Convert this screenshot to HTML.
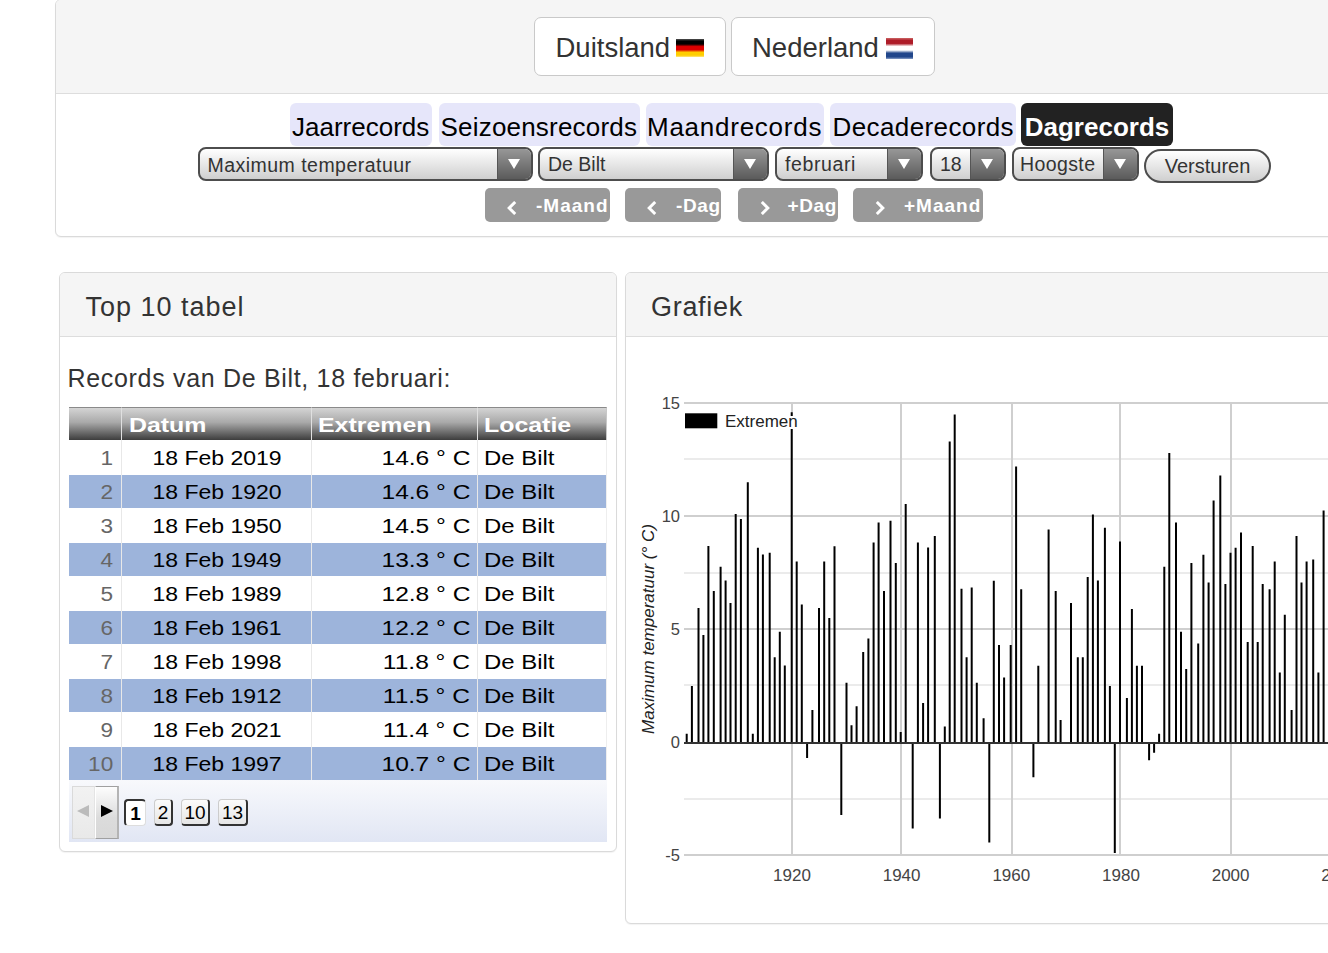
<!DOCTYPE html>
<html><head><meta charset="utf-8">
<style>
*{box-sizing:border-box;margin:0;padding:0}
html,body{width:1328px;height:953px;overflow:hidden;background:#fff;font-family:"Liberation Sans",sans-serif;color:#333}
.abs{position:absolute}
.panel{position:absolute;border:1px solid #dadada;border-radius:6px;background:#fff;box-shadow:0 1px 1px rgba(0,0,0,.05);overflow:hidden}
.ph{position:absolute;left:0;top:0;right:0;background:#f5f5f5;border-bottom:1px solid #ddd}
.cbtn{position:absolute;top:16.5px;height:59px;border:1.5px solid #c9c9c9;border-radius:7px;background:#fff;font-size:27px;color:#333;white-space:nowrap}
.cbtn span{position:absolute;top:13px;line-height:31px}
.tab{position:absolute;top:103px;height:43px;background:#e6e6fa;border-radius:6px;font-size:26px;color:#000;line-height:48px;white-space:nowrap;text-align:center}
.sel{position:absolute;top:147px;height:34px;border:2px solid #4d4d4d;border-radius:8px;background:linear-gradient(#fff,#cfcfcf);overflow:hidden;font-size:19.5px;color:#333;white-space:nowrap}
.sel .t{position:absolute;left:8px;top:0;line-height:31px}
.sel .ar{position:absolute;top:-1px;bottom:-1px;right:0;width:34px;background:linear-gradient(#999,#595959);border-left:1px solid #555}
.sel .ar:after{content:"";position:absolute;left:10px;top:11px;border-left:6px solid transparent;border-right:6px solid transparent;border-top:10.5px solid #fff}
.nb{position:absolute;top:188px;height:33.5px;background:#999;border-radius:5px;color:#fff;font-weight:bold;font-size:19px;white-space:nowrap}
.nb .t{position:absolute;top:0;line-height:36px;letter-spacing:1px}
.nb svg{position:absolute;top:12.5px}
table{border-collapse:collapse}
</style></head><body>
<!-- top panel -->
<div class="panel" style="left:55px;top:-1px;width:1400px;height:238px">
  <div class="ph" style="height:94px"></div>
</div>
<div class="cbtn" style="left:534px;width:192px"><span style="left:20.5px;top:14px;font-size:27.5px">Duitsland</span>
  <div class="abs" style="left:140.5px;top:21.5px;width:28px;height:17.5px;background:linear-gradient(#555 0,#000 12%,#000 28%,#dd0000 42%,#dd0000 60%,#ffce00 74%,#ffce00 90%,#ffe680 100%)"></div></div>
<div class="cbtn" style="left:731px;width:204px"><span style="left:20px;top:14px;font-size:27.5px">Nederland</span>
  <div class="abs" style="left:153.5px;top:20.5px;width:27px;height:20.8px;background:linear-gradient(#c66 0,#ae1c28 12%,#ae1c28 26%,#fff 40%,#fff 58%,#21468b 72%,#21468b 90%,#8aa0c8 100%)"></div></div>

<div class="tab" style="left:290px;width:142px;text-align:left;padding-left:2px">Jaarrecords</div>
<div class="tab" style="left:438.5px;width:201px;text-align:left;padding-left:2px;letter-spacing:0.2px">Seizoensrecords</div>
<div class="tab" style="left:645.5px;width:178.5px;text-align:left;padding-left:1.5px;letter-spacing:0.75px">Maandrecords</div>
<div class="tab" style="left:830px;width:186px;text-align:left;padding-left:2.5px;letter-spacing:0.4px">Decaderecords</div>
<div class="tab" style="left:1021px;width:152px;background:#222;color:#fff;font-weight:bold">Dagrecords</div>

<div class="sel" style="left:198px;width:335px"><div class="t" style="left:7.5px;top:0.5px;letter-spacing:0.47px">Maximum temperatuur</div><div class="ar"></div></div>
<div class="sel" style="left:538px;width:231px"><div class="t">De Bilt</div><div class="ar"></div></div>
<div class="sel" style="left:775px;width:148px"><div class="t" style="letter-spacing:0.6px">februari</div><div class="ar"></div></div>
<div class="sel" style="left:930px;width:76px"><div class="t">18</div><div class="ar"></div></div>
<div class="sel" style="left:1012px;width:127px"><div class="t" style="left:6px;letter-spacing:0.4px">Hoogste</div><div class="ar"></div></div>
<div class="abs" style="left:1144px;top:149px;width:127px;height:34px;border:2px solid #4d4d4d;border-radius:17px;background:linear-gradient(#fff,#cfcfcf);font-size:20px;color:#333;line-height:30px;text-align:center">Versturen</div>

<div class="nb" style="left:485px;width:125px"><svg style="left:22px" width="10" height="14" viewBox="0 0 10 14"><path d="M8.2 1 2.2 7l6 6" fill="none" stroke="#fff" stroke-width="3"/></svg><div class="t" style="left:51px">-Maand</div></div>
<div class="nb" style="left:625px;width:96px"><svg style="left:22px" width="10" height="14" viewBox="0 0 10 14"><path d="M8.2 1 2.2 7l6 6" fill="none" stroke="#fff" stroke-width="3"/></svg><div class="t" style="left:51px;letter-spacing:0.6px">-Dag</div></div>
<div class="nb" style="left:738px;width:100px"><svg style="left:22px" width="10" height="14" viewBox="0 0 10 14"><path d="M1.8 1 7.8 7l-6 6" fill="none" stroke="#fff" stroke-width="3"/></svg><div class="t" style="left:49.5px;letter-spacing:0.6px">+Dag</div></div>
<div class="nb" style="left:853px;width:130px"><svg style="left:22px" width="10" height="14" viewBox="0 0 10 14"><path d="M1.8 1 7.8 7l-6 6" fill="none" stroke="#fff" stroke-width="3"/></svg><div class="t" style="left:51px">+Maand</div></div>

<!-- left panel -->
<div class="panel" style="left:59px;top:272px;width:558px;height:580px">
  <div class="ph" style="height:64px"></div>
</div>
<div class="abs" style="left:85.5px;top:291px;font-size:27px;line-height:32px;letter-spacing:1.0px;color:#333">Top 10 tabel</div>
<div class="abs" style="left:67.5px;top:363px;font-size:25px;line-height:30px;letter-spacing:0.68px;color:#333">Records van De Bilt, 18 februari:</div>

<!-- right panel -->
<div class="panel" style="left:625px;top:272px;width:800px;height:652px">
  <div class="ph" style="height:64px"></div>
</div>
<div class="abs" style="left:651px;top:291px;font-size:27px;line-height:32px;letter-spacing:0.7px;color:#333">Grafiek</div>
<style>.th{position:absolute;top:407px;height:33px;background:linear-gradient(#d4d4d4 0,#a9a9a9 45%,#3d3d3d 100%);border-top:1px solid #8a8a8a}.tht{position:absolute;top:0;line-height:34px;font-weight:bold;font-size:20px;color:#fff;transform:scaleX(1.245);transform-origin:0 50%;white-space:nowrap}.tr{position:absolute;left:69px;width:538px;height:33px}.td{position:absolute;top:0;line-height:34px;font-size:20px;color:#000;white-space:nowrap}.vs{position:absolute;width:1px;background:#e8e8e8}</style>
<div class="th" style="left:69px;width:52px"></div>
<div class="th" style="left:121px;width:190px;border-left:1px solid #e0e0e0"><div class="tht" style="left:6.5px">Datum</div></div>
<div class="th" style="left:311px;width:166px;border-left:1px solid #e0e0e0"><div class="tht" style="left:5.5px">Extremen</div></div>
<div class="th" style="left:477px;width:130px;border-left:1px solid #e0e0e0;border-right:1px solid #c8c8c8"><div class="tht" style="left:5.5px">Locatie</div></div>
<div class="tr" style="top:441px;background:#fff"><div class="td" style="right:493.5px;color:#666;transform:scaleX(1.13);transform-origin:100% 50%">1</div><div class="td" style="left:148px;width:0"><span style="position:absolute;left:0;transform:translateX(-50%) scaleX(1.15)">18 Feb 2019</span></div><div class="td" style="right:137px;transform:scaleX(1.228);transform-origin:100% 50%">14.6 ° C</div><div class="td" style="left:415px;transform:scaleX(1.197);transform-origin:0 50%">De Bilt</div></div>
<div class="tr" style="top:475px;background:#9db4db"><div class="td" style="right:493.5px;color:#666;transform:scaleX(1.13);transform-origin:100% 50%">2</div><div class="td" style="left:148px;width:0"><span style="position:absolute;left:0;transform:translateX(-50%) scaleX(1.15)">18 Feb 1920</span></div><div class="td" style="right:137px;transform:scaleX(1.228);transform-origin:100% 50%">14.6 ° C</div><div class="td" style="left:415px;transform:scaleX(1.197);transform-origin:0 50%">De Bilt</div></div>
<div class="tr" style="top:509px;background:#fff"><div class="td" style="right:493.5px;color:#666;transform:scaleX(1.13);transform-origin:100% 50%">3</div><div class="td" style="left:148px;width:0"><span style="position:absolute;left:0;transform:translateX(-50%) scaleX(1.15)">18 Feb 1950</span></div><div class="td" style="right:137px;transform:scaleX(1.228);transform-origin:100% 50%">14.5 ° C</div><div class="td" style="left:415px;transform:scaleX(1.197);transform-origin:0 50%">De Bilt</div></div>
<div class="tr" style="top:543px;background:#9db4db"><div class="td" style="right:493.5px;color:#666;transform:scaleX(1.13);transform-origin:100% 50%">4</div><div class="td" style="left:148px;width:0"><span style="position:absolute;left:0;transform:translateX(-50%) scaleX(1.15)">18 Feb 1949</span></div><div class="td" style="right:137px;transform:scaleX(1.228);transform-origin:100% 50%">13.3 ° C</div><div class="td" style="left:415px;transform:scaleX(1.197);transform-origin:0 50%">De Bilt</div></div>
<div class="tr" style="top:577px;background:#fff"><div class="td" style="right:493.5px;color:#666;transform:scaleX(1.13);transform-origin:100% 50%">5</div><div class="td" style="left:148px;width:0"><span style="position:absolute;left:0;transform:translateX(-50%) scaleX(1.15)">18 Feb 1989</span></div><div class="td" style="right:137px;transform:scaleX(1.228);transform-origin:100% 50%">12.8 ° C</div><div class="td" style="left:415px;transform:scaleX(1.197);transform-origin:0 50%">De Bilt</div></div>
<div class="tr" style="top:611px;background:#9db4db"><div class="td" style="right:493.5px;color:#666;transform:scaleX(1.13);transform-origin:100% 50%">6</div><div class="td" style="left:148px;width:0"><span style="position:absolute;left:0;transform:translateX(-50%) scaleX(1.15)">18 Feb 1961</span></div><div class="td" style="right:137px;transform:scaleX(1.228);transform-origin:100% 50%">12.2 ° C</div><div class="td" style="left:415px;transform:scaleX(1.197);transform-origin:0 50%">De Bilt</div></div>
<div class="tr" style="top:645px;background:#fff"><div class="td" style="right:493.5px;color:#666;transform:scaleX(1.13);transform-origin:100% 50%">7</div><div class="td" style="left:148px;width:0"><span style="position:absolute;left:0;transform:translateX(-50%) scaleX(1.15)">18 Feb 1998</span></div><div class="td" style="right:137px;transform:scaleX(1.228);transform-origin:100% 50%">11.8 ° C</div><div class="td" style="left:415px;transform:scaleX(1.197);transform-origin:0 50%">De Bilt</div></div>
<div class="tr" style="top:679px;background:#9db4db"><div class="td" style="right:493.5px;color:#666;transform:scaleX(1.13);transform-origin:100% 50%">8</div><div class="td" style="left:148px;width:0"><span style="position:absolute;left:0;transform:translateX(-50%) scaleX(1.15)">18 Feb 1912</span></div><div class="td" style="right:137px;transform:scaleX(1.228);transform-origin:100% 50%">11.5 ° C</div><div class="td" style="left:415px;transform:scaleX(1.197);transform-origin:0 50%">De Bilt</div></div>
<div class="tr" style="top:713px;background:#fff"><div class="td" style="right:493.5px;color:#666;transform:scaleX(1.13);transform-origin:100% 50%">9</div><div class="td" style="left:148px;width:0"><span style="position:absolute;left:0;transform:translateX(-50%) scaleX(1.15)">18 Feb 2021</span></div><div class="td" style="right:137px;transform:scaleX(1.228);transform-origin:100% 50%">11.4 ° C</div><div class="td" style="left:415px;transform:scaleX(1.197);transform-origin:0 50%">De Bilt</div></div>
<div class="tr" style="top:747px;background:#9db4db"><div class="td" style="right:493.5px;color:#666;transform:scaleX(1.13);transform-origin:100% 50%">10</div><div class="td" style="left:148px;width:0"><span style="position:absolute;left:0;transform:translateX(-50%) scaleX(1.15)">18 Feb 1997</span></div><div class="td" style="right:137px;transform:scaleX(1.228);transform-origin:100% 50%">10.7 ° C</div><div class="td" style="left:415px;transform:scaleX(1.197);transform-origin:0 50%">De Bilt</div></div>
<div class="vs" style="left:121px;top:440px;height:340px"></div>
<div class="vs" style="left:311px;top:440px;height:340px"></div>
<div class="vs" style="left:477px;top:440px;height:340px"></div>
<div class="vs" style="left:606px;top:440px;height:340px;background:#eee"></div>
<div class="abs" style="left:69px;top:780px;width:538px;height:62px;background:linear-gradient(#f8f9fc,#e1e6f4)"></div>
<div class="abs" style="left:72px;top:786px;width:23px;height:53px;background:linear-gradient(#f2f2f2,#e9e9e9);border:1px solid #dadada;border-right:1px solid #e4e4e4"></div>
<div class="abs" style="left:95px;top:786px;width:24px;height:53px;background:linear-gradient(#fdfdfd,#dcdcdc 60%,#d8d8d8);border-top:1px solid #a0a0a0;border-bottom:1px solid #a0a0a0;border-right:2px solid #b4b4b4;border-left:1px solid #fff"></div>
<svg class="abs" style="left:77px;top:805px" width="13" height="12"><path d="M0 6 12 0V12z" fill="#bbb"/></svg>
<svg class="abs" style="left:101px;top:805px" width="13" height="12"><path d="M12 6 0 0V12z" fill="#000"/></svg>
<div class="abs" style="left:124px;top:799px;width:22px;height:27px;border-radius:4px;background:#fff;border:1px solid #ddd;border-left:2px solid #333;border-top:2px solid #333;font-weight:bold;font-size:19px;color:#000;line-height:25px;text-align:center">1</div>
<div class="abs" style="left:154px;top:799px;width:19px;height:27px;border-radius:4px;background:linear-gradient(#fbfbfb,#e6e6e6);border:1px solid #ccc;border-right:2px solid #333;border-bottom:2px solid #333;font-size:19px;color:#000;line-height:25px;text-align:center">2</div>
<div class="abs" style="left:181px;top:799px;width:29px;height:27px;border-radius:4px;background:linear-gradient(#fbfbfb,#e6e6e6);border:1px solid #ccc;border-right:2px solid #333;border-bottom:2px solid #333;font-size:19px;color:#000;line-height:25px;text-align:center">10</div>
<div class="abs" style="left:218px;top:799px;width:30px;height:27px;border-radius:4px;background:linear-gradient(#fbfbfb,#e6e6e6);border:1px solid #ccc;border-right:2px solid #333;border-bottom:2px solid #333;font-size:19px;color:#000;line-height:25px;text-align:center">13</div><svg width="1328" height="953" viewBox="0 0 1328 953" style="position:absolute;left:0;top:0">
<rect x="684" y="458" width="700" height="2" fill="#ebebeb"/>
<rect x="684" y="572" width="700" height="2" fill="#ebebeb"/>
<rect x="684" y="684" width="700" height="2" fill="#ebebeb"/>
<rect x="684" y="798" width="700" height="2" fill="#ebebeb"/>
<rect x="684" y="402" width="700" height="2" fill="#cfcfcf"/>
<rect x="684" y="515" width="700" height="2" fill="#cfcfcf"/>
<rect x="684" y="628" width="700" height="2" fill="#cfcfcf"/>
<rect x="684" y="854" width="700" height="2" fill="#cfcfcf"/>
<rect x="791" y="402" width="2" height="454" fill="#cfcfcf"/>
<rect x="900" y="402" width="2" height="454" fill="#cfcfcf"/>
<rect x="1011" y="402" width="2" height="454" fill="#cfcfcf"/>
<rect x="1119" y="402" width="2" height="454" fill="#cfcfcf"/>
<rect x="1230" y="402" width="2" height="454" fill="#cfcfcf"/>
<rect x="1339" y="402" width="2" height="454" fill="#cfcfcf"/>
<path fill="#000" d="M685.7 733.8h2V742.2h-2zM690.9 685.9h2V742.2h-2zM697.5 608.0h2V742.2h-2zM702.4 635.1h2V742.2h-2zM707.4 546.0h2V742.2h-2zM712.8 591.0h2V742.2h-2zM719.6 566.8h2V742.2h-2zM724.6 580.6h2V742.2h-2zM729.5 603.0h2V742.2h-2zM734.7 513.9h2V742.2h-2zM739.9 518.9h2V742.2h-2zM746.8 482.3h2V742.2h-2zM751.8 733.8h2V742.2h-2zM756.9 547.8h2V742.2h-2zM761.9 554.6h2V742.2h-2zM768.7 552.8h2V742.2h-2zM773.7 657.2h2V742.2h-2zM778.8 631.7h2V742.2h-2zM783.8 665.6h2V742.2h-2zM790.7 412.2h2V742.2h-2zM795.7 561.6h2V742.2h-2zM800.8 604.6h2V742.2h-2zM806.1 742.2h2V758.0h-2zM811.4 710.1h2V742.2h-2zM818.0 608.0h2V742.2h-2zM823.2 561.6h2V742.2h-2zM828.3 618.1h2V742.2h-2zM833.5 546.3h2V742.2h-2zM840.3 742.2h2V815.0h-2zM845.5 682.8h2V742.2h-2zM850.5 725.2h2V742.2h-2zM855.6 706.3h2V742.2h-2zM862.2 652.0h2V742.2h-2zM867.4 638.5h2V742.2h-2zM872.6 542.6h2V742.2h-2zM877.6 522.5h2V742.2h-2zM883.0 591.0h2V742.2h-2zM889.5 520.7h2V742.2h-2zM894.8 563.0h2V742.2h-2zM899.7 732.0h2V742.2h-2zM904.7 504.0h2V742.2h-2zM911.7 742.2h2V828.5h-2zM916.9 542.6h2V742.2h-2zM922.1 703.1h2V742.2h-2zM927.1 547.6h2V742.2h-2zM933.8 535.9h2V742.2h-2zM938.9 742.2h2V818.6h-2zM943.8 726.6h2V742.2h-2zM948.7 441.6h2V742.2h-2zM953.7 414.5h2V742.2h-2zM960.5 588.7h2V742.2h-2zM965.6 657.2h2V742.2h-2zM970.7 587.4h2V742.2h-2zM975.8 682.8h2V742.2h-2zM982.6 718.2h2V742.2h-2zM988.3 742.2h2V842.5h-2zM992.8 580.8h2V742.2h-2zM998.0 645.0h2V742.2h-2zM1003.1 677.6h2V742.2h-2zM1009.7 645.0h2V742.2h-2zM1015.1 466.5h2V742.2h-2zM1020.2 589.2h2V742.2h-2zM1025.2 742.2h2V743.3h-2zM1032.4 742.2h2V777.2h-2zM1037.3 665.8h2V742.2h-2zM1042.8 742.2h2V743.3h-2zM1047.6 529.5h2V742.2h-2zM1054.7 591.0h2V742.2h-2zM1059.6 720.1h2V742.2h-2zM1065.2 742.2h2V742.9h-2zM1070.0 603.0h2V742.2h-2zM1076.8 657.2h2V742.2h-2zM1081.8 657.2h2V742.2h-2zM1086.7 577.0h2V742.2h-2zM1091.9 514.4h2V742.2h-2zM1096.9 580.6h2V742.2h-2zM1103.9 527.7h2V742.2h-2zM1108.9 685.9h2V742.2h-2zM1113.8 742.2h2V852.9h-2zM1119.0 541.5h2V742.2h-2zM1125.9 697.9h2V742.2h-2zM1130.9 609.1h2V742.2h-2zM1135.9 665.8h2V742.2h-2zM1141.0 665.8h2V742.2h-2zM1148.1 742.2h2V760.3h-2zM1153.1 742.2h2V752.8h-2zM1158.1 733.8h2V742.2h-2zM1163.3 566.8h2V742.2h-2zM1168.3 452.9h2V742.2h-2zM1175.0 522.5h2V742.2h-2zM1180.0 631.7h2V742.2h-2zM1185.2 669.0h2V742.2h-2zM1190.4 563.0h2V742.2h-2zM1197.2 643.4h2V742.2h-2zM1202.4 554.8h2V742.2h-2zM1207.6 582.6h2V742.2h-2zM1212.6 500.4h2V742.2h-2zM1219.3 475.5h2V742.2h-2zM1224.4 584.0h2V742.2h-2zM1229.5 552.8h2V742.2h-2zM1234.6 547.8h2V742.2h-2zM1240.0 532.5h2V742.2h-2zM1246.7 642.1h2V742.2h-2zM1251.7 546.0h2V742.2h-2zM1256.7 642.1h2V742.2h-2zM1261.7 584.0h2V742.2h-2zM1268.6 589.2h2V742.2h-2zM1273.7 561.6h2V742.2h-2zM1278.8 672.4h2V742.2h-2zM1283.8 614.7h2V742.2h-2zM1290.6 710.1h2V742.2h-2zM1295.5 535.9h2V742.2h-2zM1300.5 582.6h2V742.2h-2zM1305.6 561.6h2V742.2h-2zM1312.2 559.6h2V742.2h-2zM1317.4 672.4h2V742.2h-2zM1322.6 510.6h2V742.2h-2z"/>
<rect x="684" y="742" width="700" height="2" fill="#333"/>
<text x="680" y="408.8" text-anchor="end" font-family="Liberation Sans" font-size="16.5" fill="#444">15</text>
<text x="680" y="521.8" text-anchor="end" font-family="Liberation Sans" font-size="16.5" fill="#444">10</text>
<text x="680" y="634.8" text-anchor="end" font-family="Liberation Sans" font-size="16.5" fill="#444">5</text>
<text x="680" y="747.8" text-anchor="end" font-family="Liberation Sans" font-size="16.5" fill="#444">0</text>
<text x="680" y="860.8" text-anchor="end" font-family="Liberation Sans" font-size="16.5" fill="#444">-5</text>
<text x="792.0" y="881" text-anchor="middle" font-family="Liberation Sans" font-size="17" fill="#444">1920</text>
<text x="901.6" y="881" text-anchor="middle" font-family="Liberation Sans" font-size="17" fill="#444">1940</text>
<text x="1011.3" y="881" text-anchor="middle" font-family="Liberation Sans" font-size="17" fill="#444">1960</text>
<text x="1121.0" y="881" text-anchor="middle" font-family="Liberation Sans" font-size="17" fill="#444">1980</text>
<text x="1230.6" y="881" text-anchor="middle" font-family="Liberation Sans" font-size="17" fill="#444">2000</text>
<text x="1340.2" y="881" text-anchor="middle" font-family="Liberation Sans" font-size="17" fill="#444">2020</text>
<text transform="translate(654,629) rotate(-90)" text-anchor="middle" font-family="Liberation Sans" font-style="italic" font-size="17" fill="#222">Maximum temperatuur (° C)</text>
<rect x="685" y="413.3" width="32.3" height="15" fill="#000"/>
<rect x="723" y="416" width="76" height="13" fill="#fff"/>
<text x="725" y="427" font-family="Liberation Sans" font-size="17" fill="#222">Extremen</text>
</svg>
</body></html>
